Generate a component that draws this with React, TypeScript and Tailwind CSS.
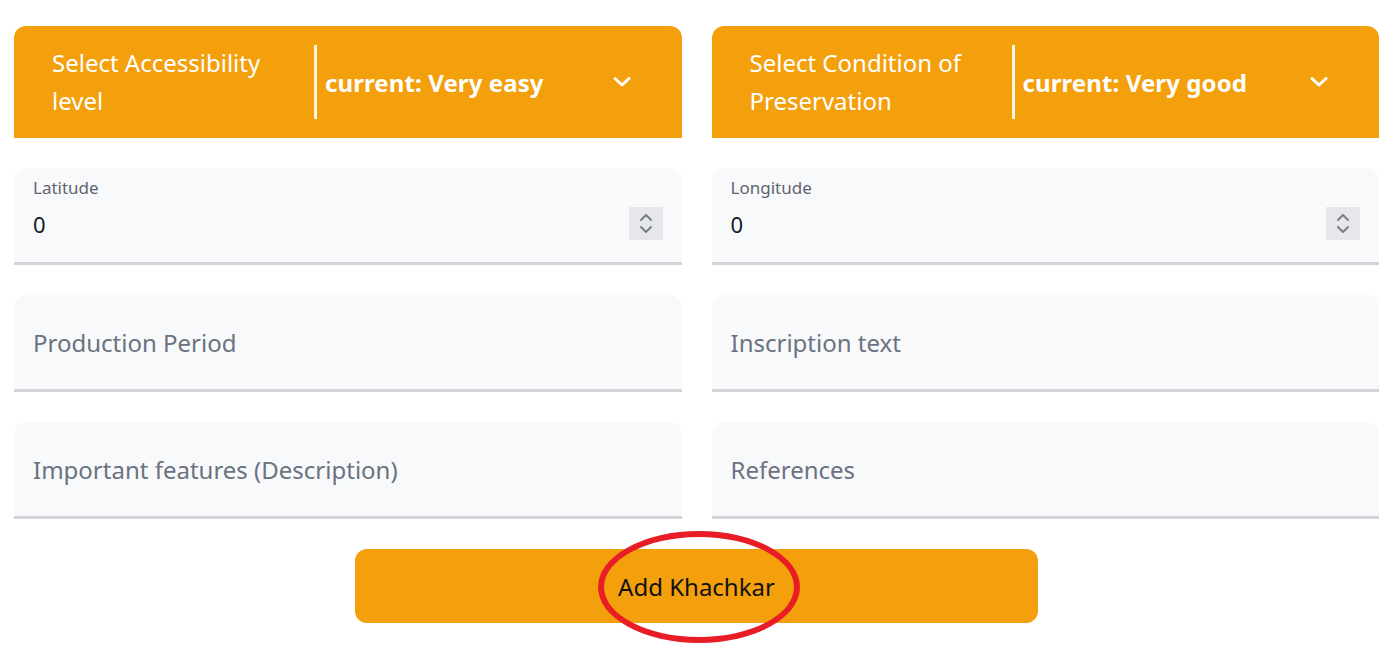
import React from "react";

const font = { fontFamily: '"Noto Sans", "Open Sans", sans-serif' };

function Chevron() {
  return (
    <svg width="20" height="12" viewBox="0 0 20 12" fill="none">
      <path d="M3 2.5 L10 9 L17 2.5" stroke="white" strokeWidth="3" strokeLinecap="round" strokeLinejoin="round" />
    </svg>
  );
}

function Header({ l1, l2, current }: { l1: string; l2: string; current: string }) {
  return (
    <div className="h-[112px] bg-[#f49f0c] rounded-t-[12px] flex items-center pl-[38px] pr-[50px]">
      <div className="w-[262px] text-white text-[24px] leading-[38px] shrink-0">
        <div>{l1}</div>
        <div>{l2}</div>
      </div>
      <div className="w-[3px] h-[74px] bg-white/90 shrink-0" />
      <div className="flex-1 pl-[8px] text-white font-bold text-[24px] pt-[2px] tracking-[0.1px]">{current}</div>
      <Chevron />
    </div>
  );
}

function Spinner() {
  return (
    <div className="w-[34px] h-[33px] bg-[#e6e7ea] flex flex-col items-center justify-center gap-[3px]">
      <svg width="14" height="9" viewBox="0 0 14 9" fill="none">
        <path d="M2 7 L7 2 L12 7" stroke="#7b7d8c" strokeWidth="2" strokeLinecap="round" strokeLinejoin="round" />
      </svg>
      <svg width="14" height="9" viewBox="0 0 14 9" fill="none">
        <path d="M2 2 L7 7 L12 2" stroke="#7b7d8c" strokeWidth="2" strokeLinecap="round" strokeLinejoin="round" />
      </svg>
    </div>
  );
}

function NumField({ label }: { label: string }) {
  return (
    <div className="h-[97px] bg-[#f8f9fb] rounded-t-[12px] border-b-[3px] border-[#d3d4da] pl-[19px] pr-[19px] pt-[8px] relative">
      <div className="text-[17px] text-[#5f6470] leading-[24px]">{label}</div>
      <div className="flex items-center justify-between mt-[7px]">
        <div className="text-[22px] text-[#111827] leading-[30px]">0</div>
        <Spinner />
      </div>
    </div>
  );
}

function TextField({ placeholder }: { placeholder: string }) {
  return (
    <div className="h-[97px] bg-[#f8f9fb] rounded-t-[12px] border-b-[3px] border-[#d3d4da] pl-[19px] flex items-center">
      <div className="text-[24px] text-[#6b7280] pt-[2px]">{placeholder}</div>
    </div>
  );
}

export default function App() {
  return (
    <div className="w-[1393px] h-[653px] bg-white overflow-hidden" style={font}>
      <div className="px-[14px] pt-[26px] grid grid-cols-2 gap-x-[30px] gap-y-[30px]">
        <Header l1="Select Accessibility" l2="level" current="current: Very easy" />
        <Header l1="Select Condition of" l2="Preservation" current="current: Very good" />
        <NumField label="Latitude" />
        <NumField label="Longitude" />
        <TextField placeholder="Production Period" />
        <TextField placeholder="Inscription text" />
        <TextField placeholder="Important features (Description)" />
        <TextField placeholder="References" />
      </div>
      <div className="flex justify-center mt-[30px]">
        <div className="relative w-[683px] h-[74px] bg-[#f49f0c] rounded-[12px] flex items-center justify-center">
          <span className="text-[24px] text-[#111] pt-[1px]">Add Khachkar</span>
          <div className="absolute left-[243px] top-[-18px] w-[202px] h-[112px] rounded-[50%] border-[6px] border-[#e81d25]" />
        </div>
      </div>
    </div>
  );
}
